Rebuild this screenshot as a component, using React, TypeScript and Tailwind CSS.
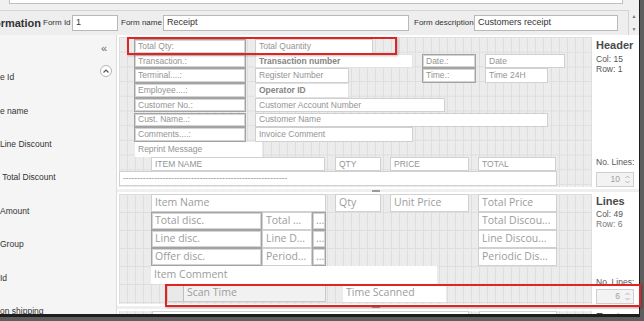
import React from "react"

type Look = "dark" | "light" | "plain" | "grey" | "white"

type Field = {
  text: string
  x: number
  w: number
  row: number
  look?: Look
  bold?: boolean
  divider?: boolean
}

const looks: Record<Look, string> = {
  dark: "bg-white border border-[#a3a3a3] shadow-[inset_0_0_0_1px_#d4d4d4]",
  light: "bg-white border border-[#d0d0d0]",
  plain: "bg-white",
  grey: "bg-[#f1f1f1] border border-[#c9c9c9]",
  white: "bg-white border border-[#e2e2e2]",
}

const headerFields: Field[] = [
  { text: "Total Qty:", x: 15, w: 112, row: 0, look: "dark" },
  { text: "Transaction.:", x: 15, w: 112, row: 1, look: "dark" },
  { text: "Terminal....:", x: 15, w: 112, row: 2, look: "dark" },
  { text: "Employee....:", x: 15, w: 112, row: 3, look: "dark" },
  { text: "Customer No.:", x: 15, w: 112, row: 4, look: "dark" },
  { text: "Cust. Name..:", x: 15, w: 112, row: 5, look: "dark" },
  { text: "Comments....:", x: 15, w: 112, row: 6, look: "dark" },
  { text: "Total Quantity", x: 136, w: 118, row: 0 },
  { text: "Transaction number", x: 136, w: 158, row: 1, bold: true, look: "white" },
  { text: "Register Number", x: 136, w: 94, row: 2 },
  { text: "Operator ID", x: 136, w: 94, row: 3, bold: true, look: "white" },
  { text: "Customer Account Number", x: 136, w: 190, row: 4 },
  { text: "Customer Name", x: 136, w: 293, row: 5 },
  { text: "Invoice Comment", x: 136, w: 158, row: 6 },
  { text: "Date.:", x: 303, w: 54, row: 1, look: "dark" },
  { text: "Time.:", x: 303, w: 54, row: 2, look: "dark" },
  { text: "Date", x: 366, w: 80, row: 1 },
  { text: "Time 24H", x: 366, w: 63, row: 2 },
  { text: "Reprint Message", x: 16, w: 127, row: 7, look: "plain" },
  { text: "ITEM NAME", x: 32, w: 174, row: 8 },
  { text: "QTY", x: 216, w: 46, row: 8 },
  { text: "PRICE", x: 271, w: 79, row: 8 },
  { text: "TOTAL", x: 359, w: 78, row: 8 },
  { text: "-".repeat(58), x: 0, w: 438, row: 9 },
]

const lineFields: Field[] = [
  { text: "Item Name", x: 32, w: 175, row: 0 },
  { text: "Qty", x: 216, w: 46, row: 0 },
  { text: "Unit Price", x: 271, w: 79, row: 0 },
  { text: "Total Price", x: 359, w: 79, row: 0 },
  { text: "Total disc.", x: 32, w: 111, row: 1, look: "dark" },
  { text: "Line disc.", x: 32, w: 111, row: 2, look: "dark" },
  { text: "Offer disc.", x: 32, w: 111, row: 3, look: "dark" },
  { text: "Total ...", x: 143, w: 50, row: 1 },
  { text: "Line D...", x: 143, w: 50, row: 2 },
  { text: "Period...", x: 143, w: 50, row: 3 },
  { text: "...", x: 193, w: 14, row: 1, look: "dark" },
  { text: "...", x: 193, w: 14, row: 2, look: "dark" },
  { text: "...", x: 193, w: 14, row: 3, look: "dark" },
  { text: "Total Discou...", x: 359, w: 79, row: 1 },
  { text: "Line Discou...", x: 359, w: 79, row: 2 },
  { text: "Periodic Dis...", x: 359, w: 79, row: 3 },
  { text: "Item Comment", x: 32, w: 286, row: 4, look: "plain" },
  { text: "Scan Time", x: 48, w: 159, row: 5, look: "grey", divider: true },
  { text: "Time Scanned", x: 224, w: 103, row: 5, look: "plain" },
]

const footerFields: Field[] = [
  { text: "Markup description", x: 33, w: 317, row: 0 },
  { text: "Markup ...", x: 360, w: 78, row: 0 },
]

const leftItems = ["e Id", "e name", "Line Discount", " Total Discount", "Amount", "Group", "Id", "on shipping"]

function FieldBox({ f, top, rowH }: { f: Field; top: number; rowH: number }) {
  return (
    <div
      className={`absolute flex items-center overflow-hidden whitespace-nowrap ${looks[f.look ?? "light"]} ${
        f.bold ? "font-bold text-[#858585]" : ""
      }`}
      style={{ left: f.x, top: top + f.row * rowH, width: f.w, height: rowH }}
    >
      {f.divider && <div className="w-[16px] h-full border-r border-[#bdbdbd] bg-[#e9e9e9]" />}
      <span className="pl-[3px]">{f.text}</span>
    </div>
  )
}

function Spinner({ value }: { value: string }) {
  return (
    <div className="flex items-center h-[15px] w-[38px] border border-[#cfcfcf] bg-[#f3f3f3] text-[8.5px] text-[#a0a0a0]">
      <span className="flex-1 text-right pr-[4px]">{value}</span>
      <svg width="7" height="11" viewBox="0 0 7 11" className="mr-[2px]">
        <path d="M1.5 4 L3.5 2 L5.5 4" fill="none" stroke="#b5b5b5" strokeWidth="1" />
        <path d="M1.5 7 L3.5 9 L5.5 7" fill="none" stroke="#b5b5b5" strokeWidth="1" />
      </svg>
    </div>
  )
}

function Handle() {
  return (
    <div className="flex justify-center pl-[6px]">
      <div className="w-[8px] h-[2px] bg-[#9c9c9c] mr-[10px]" />
    </div>
  )
}

export default function App() {
  return (
    <div className="relative w-[644px] h-[321px] overflow-hidden bg-[#5e5e5e] font-['Liberation_Sans',Arial,sans-serif] text-[#333]">
      <div className="flex flex-col w-[640px] h-[317px] overflow-hidden bg-[#f0f0f0] border-r border-b-[3px] border-[#1e1e1e]">
        {/* top strip */}
        <div className="h-[10px] shrink-0">
          <div className="ml-[9px] w-[614px] h-[4px] bg-white border-x border-b border-[#bfbfbf]" />
        </div>

        {/* form info row */}
        <div className="flex h-[25px] shrink-0">
          <div className="flex items-center w-[629px] border-t border-r border-[#d4d4d4] bg-[#eeeeee] text-[8px] text-[#333]">
            <div className="flex justify-end w-[41px] overflow-hidden whitespace-nowrap">
              <span className="font-bold text-[11px] text-[#333]">Information</span>
            </div>
            <span className="ml-[2px] w-[29px]">Form Id</span>
            <div className="flex items-center w-[46px] h-[16px] bg-white border border-[#b9b9b9] pl-[3px] text-[9px]">1</div>
            <span className="ml-[3px] w-[42px] whitespace-nowrap">Form name</span>
            <div className="flex items-center w-[246px] h-[16px] bg-white border border-[#b9b9b9] pl-[3px] text-[9px]">Receipt</div>
            <span className="ml-[5px] w-[60px] whitespace-nowrap">Form description</span>
            <div className="flex items-center w-[144px] h-[16px] bg-white border border-[#b9b9b9] pl-[3px] text-[9px]">
              Customers receipt
            </div>
          </div>
          <div className="flex flex-col items-center justify-between flex-1 py-[3px] text-[5px] leading-[6px] text-[#777]">
            <span>▲</span>
            <span>▼</span>
          </div>
        </div>

        {/* main */}
        <div className="flex flex-1 min-h-0">
          {/* left panel */}
          <div className="w-[117px] shrink-0 bg-[#f5f5f5] border-r border-[#dddddd] text-[8.5px] text-[#333] overflow-hidden">
            <div className="flex justify-end items-center h-[26px] pr-[9px] text-[11px] text-[#666]">«</div>
            {leftItems.map((t, i) => (
              <div key={t} className="flex justify-between h-[33.4px] whitespace-pre">
                <span className="self-center">{t}</span>
                {i === 0 && (
                  <div className="mt-[4px] mr-[4px] flex items-center justify-center w-[12px] h-[12px] rounded-full border border-[#b5b5b5] bg-white">
                    <svg width="6" height="4" viewBox="0 0 6 4">
                      <path d="M0.5 3.5 L3 1 L5.5 3.5" fill="none" stroke="#555" strokeWidth="1.2" />
                    </svg>
                  </div>
                )}
              </div>
            ))}
          </div>

          {/* designer */}
          <div className="flex flex-col flex-1 bg-[#efefef] min-w-0">
            {/* Header section */}
            <div className="flex h-[154px] shrink-0 bg-white pl-[2px] pt-[2px]">
              <div className="relative w-[473px] h-[150px] bg-[#ececec] [background-image:linear-gradient(to_right,#dedede_1px,transparent_1px),linear-gradient(to_bottom,#dedede_1px,transparent_1px)] [background-size:8px_14.7px] text-[8.5px] text-[#949494]">
                {headerFields.map((f, i) => (
                  <FieldBox key={i} f={f} top={2} rowH={14.7} />
                ))}
              </div>
              <div className="flex flex-col justify-between flex-1 pl-[4px] pt-[2px] pb-[2px]">
                <div>
                  <div className="text-[11px] leading-[13px] font-bold text-[#4a4a4a]">Header</div>
                  <div className="mt-[2px] text-[8.5px] leading-[10px] text-[#555]">Col: 15</div>
                  <div className="text-[8.5px] leading-[10px] text-[#555]">Row: 1</div>
                </div>
                <div>
                  <div className="text-[8.5px] leading-[10px] text-[#555] whitespace-nowrap">No. Lines:</div>
                  <div className="mt-[5px]">
                    <Spinner value="10" />
                  </div>
                </div>
              </div>
            </div>

            <div className="h-[3px] shrink-0 flex flex-col justify-center">
              <Handle />
            </div>

            {/* Lines section */}
            <div className="flex h-[114px] shrink-0 bg-white pl-[2px] pt-[2px]">
              <div className="relative w-[473px] h-[110px] bg-[#ececec] [background-image:linear-gradient(to_right,#dedede_1px,transparent_1px),linear-gradient(to_bottom,#dedede_1px,transparent_1px)] [background-size:8px_18px] font-['Open_Sans','Noto_Sans',sans-serif] text-[10.5px] text-[#9c9c9c]">
                {lineFields.map((f, i) => (
                  <FieldBox key={i} f={f} top={0} rowH={18} />
                ))}
              </div>
              <div className="flex flex-col justify-between flex-1 pl-[4px] pt-[1px] pb-[2px]">
                <div>
                  <div className="text-[11px] leading-[13px] font-bold text-[#4a4a4a]">Lines</div>
                  <div className="mt-[1px] text-[8.5px] leading-[10px] text-[#555]">Col: 49</div>
                  <div className="text-[8.5px] leading-[10px] text-[#777]">Row: 6</div>
                </div>
                <div>
                  <div className="text-[8.5px] leading-[10px] text-[#555] whitespace-nowrap">No. Lines:</div>
                  <div className="mt-[2px]">
                    <Spinner value="6" />
                  </div>
                </div>
              </div>
            </div>

            <div className="h-[3px] shrink-0 flex flex-col justify-start">
              <Handle />
            </div>

            {/* Footer section */}
            <div className="flex flex-1 bg-white pl-[2px] pt-[2px]">
              <div className="relative w-[473px] h-[30px] bg-[#ececec] [background-image:linear-gradient(to_right,#dedede_1px,transparent_1px)] [background-size:8px_18px] font-['Open_Sans','Noto_Sans',sans-serif] text-[10.5px] text-[#9c9c9c]">
                {footerFields.map((f, i) => (
                  <FieldBox key={i} f={f} top={0} rowH={18} />
                ))}
              </div>
              <div className="flex-1 pl-[4px]">
                <div className="text-[11px] leading-[13px] font-bold text-[#4a4a4a]">Footer</div>
              </div>
            </div>
          </div>
        </div>
      </div>

      {/* highlight markers */}
      <div className="absolute left-[127px] top-[37px] w-[270px] h-[18px] border-2 border-[#e02424] shadow-[1px_1px_2px_rgba(0,0,0,0.25)]" />
      <div className="absolute left-[165px] top-[284px] w-[476px] h-[23px] border-2 border-[#e02424] shadow-[1px_1px_2px_rgba(0,0,0,0.25)]" />
    </div>
  )
}
